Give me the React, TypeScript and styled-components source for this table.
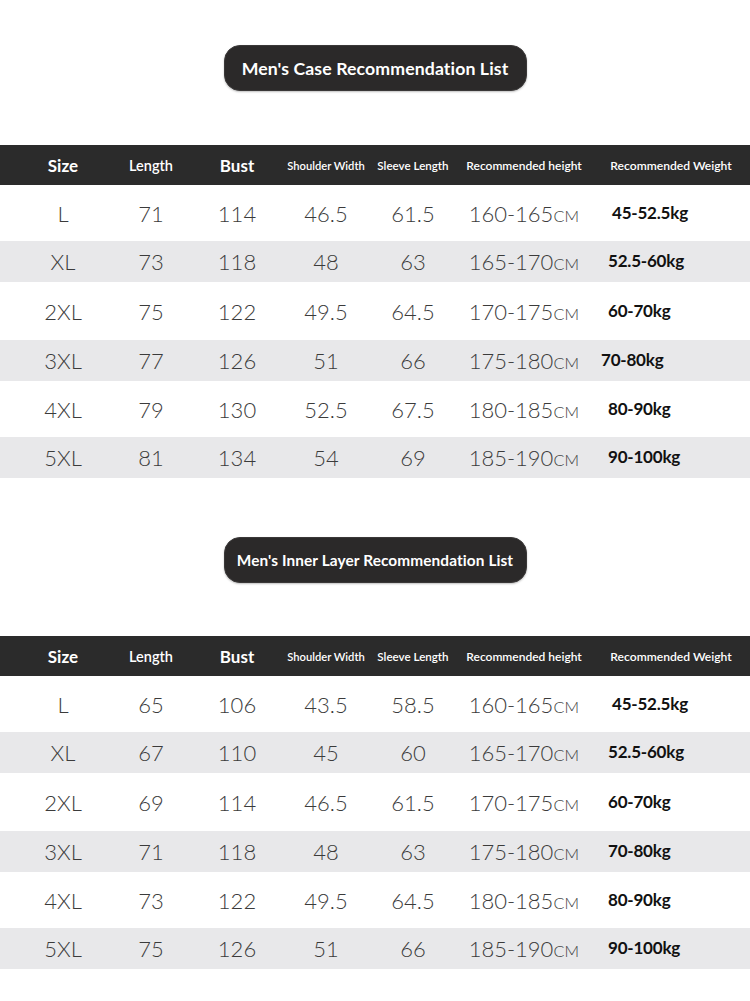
import React from 'react'
import styled, {createGlobalStyle} from 'styled-components'

const GlobalStyle = createGlobalStyle`
  html, body {
    margin: 0;
    padding: 0;
    background: #ffffff;
  }
  body {
    font-family: Lato, 'Liberation Sans', sans-serif;
  }
`

const Page = styled.div`
  width: 750px;
  height: 1001px;
  overflow: hidden;
  display: flex;
  flex-direction: column;
  padding-top: 45px;
  box-sizing: border-box;
`

const Section = styled.section<{$gap: number; $after: number}>`
  display: flex;
  flex-direction: column;
  align-items: center;
  row-gap: ${(p) => p.$gap}px;
  margin-bottom: ${(p) => p.$after}px;
`

const TitlePill = styled.div<{$size: number}>`
  width: 303px;
  height: 46px;
  box-sizing: border-box;
  display: flex;
  align-items: center;
  justify-content: center;
  background: #2b2929;
  border: 1px solid #3a3838;
  border-radius: 16px;
  box-shadow: 0 1px 2px rgba(0, 0, 0, 0.25);
  color: #ffffff;
  font-family: Lato, 'Liberation Sans', sans-serif;
  font-weight: 700;
  font-size: ${(p) => p.$size}px;
  letter-spacing: 0.1px;
`

const Table = styled.div`
  width: 750px;
  display: flex;
  flex-direction: column;
`

const columns = '94px 82px 90px 88px 86px 136px 158px'

const HeaderRow = styled.div`
  display: grid;
  grid-template-columns: ${columns};
  padding-left: 16px;
  height: 40px;
  align-items: center;
  background: #2b2b2b;
  color: #ffffff;
`

const HeadCell = styled.div<{$size: number; $weight: number}>`
  text-align: center;
  white-space: nowrap;
  font-family: Lato, 'Liberation Sans', sans-serif;
  font-size: ${(p) => p.$size}px;
  font-weight: ${(p) => p.$weight};
`

const BodyRow = styled.div<{$shade: boolean; $height: number}>`
  display: grid;
  grid-template-columns: ${columns};
  padding-left: 16px;
  height: ${(p) => p.$height}px;
  align-items: center;
  background: ${(p) => (p.$shade ? '#e8e8ea' : '#ffffff')};
`

const Cell = styled.div`
  text-align: center;
  white-space: nowrap;
  color: #3b3b3b;
  font-family: Lato, 'Liberation Sans', sans-serif;
  font-weight: 300;
  font-size: 22px;
`

const Unit = styled.span`
  font-size: 16px;
  letter-spacing: 0.3px;
`

const WeightCell = styled.div<{$shift: number}>`
  white-space: nowrap;
  padding-left: ${(p) => 16 + p.$shift}px;
  padding-bottom: 2px;
  color: #111111;
  font-family: Lato, 'Liberation Sans', sans-serif;
  font-weight: 700;
  font-size: 17px;
  letter-spacing: -0.2px;
`

type Row = {
  size: string
  length: string
  bust: string
  shoulder: string
  sleeve: string
  height: string
  weight: string
  shift: number
}

const heights = ['160-165', '165-170', '170-175', '175-180', '180-185', '185-190']
const weights = ['45-52.5kg', '52.5-60kg', '60-70kg', '70-80kg', '80-90kg', '90-100kg']
const sizes = ['L', 'XL', '2XL', '3XL', '4XL', '5XL']

const makeRows = (
  length: string[],
  bust: string[],
  shoulder: string[],
  sleeve: string[],
  shifts: number[]
): Row[] =>
  sizes.map((size, i) => ({
    size,
    length: length[i],
    bust: bust[i],
    shoulder: shoulder[i],
    sleeve: sleeve[i],
    height: heights[i],
    weight: weights[i],
    shift: shifts[i],
  }))

const caseRows = makeRows(
  ['71', '73', '75', '77', '79', '81'],
  ['114', '118', '122', '126', '130', '134'],
  ['46.5', '48', '49.5', '51', '52.5', '54'],
  ['61.5', '63', '64.5', '66', '67.5', '69'],
  [4, 0, 0, -7, 0, 0]
)

const innerRows = makeRows(
  ['65', '67', '69', '71', '73', '75'],
  ['106', '110', '114', '118', '122', '126'],
  ['43.5', '45', '46.5', '48', '49.5', '51'],
  ['58.5', '60', '61.5', '63', '64.5', '66'],
  [4, 0, 0, 0, 0, 0]
)

const rowHeights = [56, 41, 58, 41, 56, 41]

function SizeTable({rows}: {rows: Row[]}) {
  return (
    <Table>
      <HeaderRow>
        <HeadCell $size={17} $weight={700}>Size</HeadCell>
        <HeadCell $size={14.5} $weight={600}>Length</HeadCell>
        <HeadCell $size={17} $weight={700}>Bust</HeadCell>
        <HeadCell $size={11.2} $weight={600}>Shoulder Width</HeadCell>
        <HeadCell $size={11.6} $weight={600}>Sleeve Length</HeadCell>
        <HeadCell $size={12} $weight={600}>Recommended height</HeadCell>
        <HeadCell $size={12.1} $weight={600}>Recommended Weight</HeadCell>
      </HeaderRow>
      {rows.map((r, i) => (
        <BodyRow key={r.size} $shade={i % 2 === 1} $height={rowHeights[i]}>
          <Cell>{r.size}</Cell>
          <Cell>{r.length}</Cell>
          <Cell>{r.bust}</Cell>
          <Cell>{r.shoulder}</Cell>
          <Cell>{r.sleeve}</Cell>
          <Cell>
            {r.height}
            <Unit>CM</Unit>
          </Cell>
          <WeightCell $shift={r.shift}>{r.weight}</WeightCell>
        </BodyRow>
      ))}
    </Table>
  )
}

export default function App() {
  return (
    <>
      <GlobalStyle />
      <Page>
        <Section $gap={54} $after={59}>
          <TitlePill $size={17.7}>Men's Case Recommendation List</TitlePill>
          <SizeTable rows={caseRows} />
        </Section>
        <Section $gap={53} $after={0}>
          <TitlePill $size={15.4}>Men's Inner Layer Recommendation List</TitlePill>
          <SizeTable rows={innerRows} />
        </Section>
      </Page>
    </>
  )
}
